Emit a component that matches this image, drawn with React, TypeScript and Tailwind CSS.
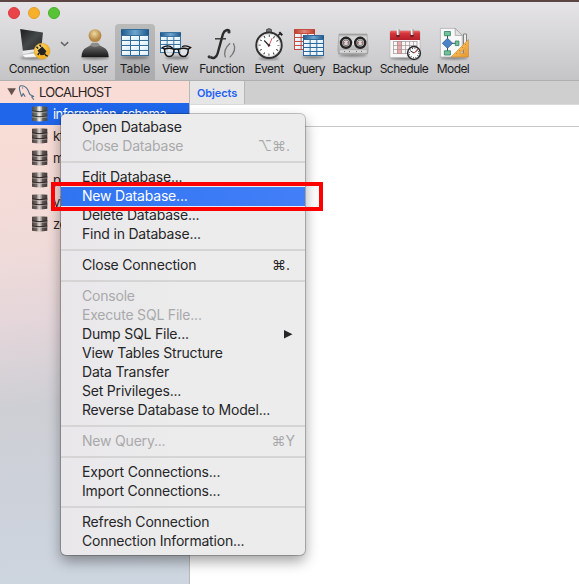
import React from "react";

function Defs() {
  return (
    <svg className="absolute h-0 w-0">
      <defs>
        <linearGradient id="blueHead" x1="0" x2="1"><stop offset="0" stopColor="#1d5689" /><stop offset=".5" stopColor="#6ea6ce" /><stop offset="1" stopColor="#1d5689" /></linearGradient>
        <linearGradient id="redHead" x1="0" x2="1"><stop offset="0" stopColor="#b83a2c" /><stop offset=".5" stopColor="#e08877" /><stop offset="1" stopColor="#b83a2c" /></linearGradient>
        <linearGradient id="cell" x1="0" y1="0" x2="1" y2="1"><stop offset="0" stopColor="#ffffff" /><stop offset="1" stopColor="#d3eafa" /></linearGradient>
        <linearGradient id="screen" x1="0" y1="0" x2="1" y2="1"><stop offset="0" stopColor="#1b1d1e" /><stop offset=".5" stopColor="#454849" /><stop offset="1" stopColor="#232526" /></linearGradient>
        <radialGradient id="gold" cx=".4" cy=".35"><stop offset="0" stopColor="#ffe793" /><stop offset="1" stopColor="#f5b022" /></radialGradient>
        <radialGradient id="skin" cx=".45" cy=".35"><stop offset="0" stopColor="#f0d9a3" /><stop offset="1" stopColor="#b48843" /></radialGradient>
        <linearGradient id="suit" x1="0" y1="0" x2="0" y2="1"><stop offset="0" stopColor="#777" /><stop offset=".45" stopColor="#484848" /><stop offset="1" stopColor="#171717" /></linearGradient>
        <linearGradient id="metal" x1="0" y1="0" x2="0" y2="1"><stop offset="0" stopColor="#9b9b9b" /><stop offset=".15" stopColor="#d9d9d9" /><stop offset="1" stopColor="#aaa" /></linearGradient>
        <linearGradient id="redCal" x1="0" y1="0" x2="0" y2="1"><stop offset="0" stopColor="#ef6a68" /><stop offset=".3" stopColor="#d3343a" /><stop offset="1" stopColor="#b51f28" /></linearGradient>
        <linearGradient id="ruler" x1="0" y1="0" x2="1" y2="1"><stop offset="0" stopColor="#ffd874" /><stop offset="1" stopColor="#e8962a" /></linearGradient>
        <linearGradient id="drum" x1="0" x2="1"><stop offset="0" stopColor="#4b403d" /><stop offset=".28" stopColor="#6f6461" /><stop offset=".36" stopColor="#b5aca8" /><stop offset=".5" stopColor="#d8cfcb" /><stop offset=".66" stopColor="#8a7f7b" /><stop offset=".72" stopColor="#5c5250" /><stop offset="1" stopColor="#40383a" /></linearGradient>
        <linearGradient id="drumLit" x1="0" x2="1"><stop offset="0" stopColor="#4c4b4c" /><stop offset=".28" stopColor="#74756f" /><stop offset=".36" stopColor="#c9c8bf" /><stop offset=".5" stopColor="#f1efe4" /><stop offset=".66" stopColor="#97968f" /><stop offset=".72" stopColor="#605f5d" /><stop offset="1" stopColor="#47464a" /></linearGradient>
        <filter id="soft" x="-20%" y="-100%" width="140%" height="300%"><feGaussianBlur stdDeviation="1" /></filter>
      </defs>
    </svg>
  );
}

function Shadow({ cx, cy, rx }: { cx: number; cy: number; rx: number }) {
  return <ellipse cx={cx} cy={cy} rx={rx} ry="1.5" fill="#333" opacity=".5" filter="url(#soft)" />;
}

function Grid({ x, y, w, h, head, line, fill, rows }: { x: number; y: number; w: number; h: number; head: number; line: string; fill: string; rows: number }) {
  const cw = (w - 1) / 3;
  const rh = (h - head) / rows;
  const cells = [];
  for (let r = 0; r < rows; r++)
    for (let c = 0; c < 3; c++)
      cells.push(<rect key={`${r}-${c}`} x={x + 1 + c * cw} y={y + head + r * rh} width={cw - 1} height={rh - 1} fill="url(#cell)" />);
  return (
    <g>
      <rect x={x} y={y} width={w} height={h} fill={line} />
      <rect x={x} y={y} width={w} height={head - 1} fill={fill} />
      <rect x={x} y={y} width={w} height="1" fill={line} />
      {cells}
    </g>
  );
}

const icons = {
  connection: (
    <>
      <Shadow cx={33} cy={58} rx={13} />
      <path d="M30 50h6l1 5-8 1z" fill="#b9bcbe" />
      <path d="M22 54.8l13-1.8 3 2-1 2-12 .5z" fill="#fafafa" stroke="#aaa" strokeWidth=".4" />
      <path d="M20 28.7L43.5 32.4 41.5 50.5 23 54z" fill="#e8eaeb" />
      <path d="M20.2 29L43 32.6 41.4 48.4 22.8 50.8z" fill="url(#screen)" />
      <circle cx="42" cy="51.2" r="8" fill="url(#gold)" stroke="#dca132" strokeWidth=".5" />
      <path d="M37.5 50.5l4.8-3.9 4.2 4.7-2.7 3.8-3.2.1z" fill="#252321" />
      <path d="M38.2 48.5l-1.7-1.8M41 46.8l-1.4-2M44.5 53.5q1.2 2.6 3.3 2.5M39 53l-1.2 2" stroke="#252321" strokeWidth="1.5" fill="none" />
      <path d="M61 42.2l3.6 3.3 3.6-3.3" fill="none" stroke="#66666a" strokeWidth="1.6" />
    </>
  ),
  user: (
    <>
      <Shadow cx={95} cy={58} rx={14} />
      <path d="M81.5 57.2c0-5 1.8-8.3 5.5-10l5-2.8h6l5.2 2.8c3.7 1.7 5.5 5 5.5 10z" fill="url(#suit)" />
      <path d="M90 45.2q5 3.5 10 0l-2-2.5h-6z" fill="#8d8d8d" />
      <circle cx="95" cy="35.6" r="6.4" fill="url(#skin)" />
    </>
  ),
  table: (
    <>
      <Shadow cx={135} cy={57.5} rx={14} />
      <Grid x={121} y={29} w={28} h={27} head={7} rows={4} line="#336b9b" fill="url(#blueHead)" />
    </>
  ),
  view: (
    <>
      <Shadow cx={177} cy={57.7} rx={12} />
      <Grid x={160} y={32} w={21} h={21} head={5} rows={4} line="#3a73a2" fill="url(#blueHead)" />
      <g stroke="#141414" fill="#e6eaed" fillOpacity=".75">
        <path d="M164.5 49.2q4.8-2 9.5.2 0 7-4.8 7.2-4.7-.3-4.7-7.4z" strokeWidth="1.5" />
        <path d="M178.5 49.4q4.8-2.3 9.8-.2 0 7.4-5 7.4-4.5-.2-4.8-7.2z" strokeWidth="1.5" />
        <path d="M174 49.8q2.2-1.5 4.5 0M164.5 49.2l-2.2-1.6q6-3.7 10.3.3M188.3 49.2l2.4-1.6q-4.8-3-8.7-.9" fill="none" strokeWidth="1.3" />
      </g>
    </>
  ),
  fn: (
    <>
      <path d="M229.5 31.3c-1-2.1-5-1.6-6.6 2.8l-5.3 19.4c-1.2 4.1-4.3 5.6-7.2 3.5" fill="none" stroke="#2b2b2b" strokeWidth="2.4" />
      <circle cx="229" cy="31.9" r="1.6" fill="#333" />
      <circle cx="209.2" cy="56.8" r="1.6" fill="#333" />
      <path d="M215 38.8h11" stroke="#333" strokeWidth="1.4" />
      <path d="M230.1 43.2c-5 4.4-6.5 9.2-4.7 14.2M233.4 43.2c2.6 5 .7 10-3.7 14.2" fill="none" stroke="#777" strokeWidth="1.3" />
    </>
  ),
  event: (
    <>
      <Shadow cx={269} cy={58.5} rx={10} />
      <path d="M266.5 29.6q2.5-2 5 0v3h-5z" fill="#777" stroke="#333" strokeWidth=".7" />
      <path d="M278 35.5l3-2.5" stroke="#222" strokeWidth="1.5" />
      <path d="M279.3 32.2l3 3" stroke="#222" strokeWidth="2" />
      <circle cx="269" cy="45.3" r="12.7" fill="#fff" stroke="#303030" strokeWidth="2" />
      <circle cx="269" cy="45.3" r="11.3" fill="none" stroke="#bbb" strokeWidth=".6" />
      <circle cx="269" cy="45.3" r="9.4" fill="none" stroke="#333" strokeWidth="2.2" strokeDasharray=".9 4.02" strokeDashoffset=".45" />
      <path d="M269 45.5l-4.8-5" stroke="#222" strokeWidth="1.2" />
      <path d="M268.4 47l3.8-9" stroke="#dc5260" strokeWidth="1" />
      <circle cx="269" cy="45.3" r="1.2" fill="#333" />
    </>
  ),
  query: (
    <>
      <Shadow cx={313} cy={57.3} rx={11} />
      <Grid x={294} y={29} w={21} h={21} head={5} rows={4} line="#c54b3c" fill="url(#redHead)" />
      <Grid x={303} y={35} w={21} h={21} head={5} rows={4} line="#2f6898" fill="url(#blueHead)" />
    </>
  ),
  backup: (
    <>
      <Shadow cx={353} cy={55.3} rx={14} />
      <path d="M339 34h28l1.2 15.5-.7 4.5h-29l-.7-4.5z" fill="url(#metal)" stroke="#999" strokeWidth=".6" />
      <path d="M339.5 49.8h27.5v3.3h-27.5z" fill="#d9d9d9" stroke="#999" strokeWidth=".4" />
      <path d="M350 40h7v5h-7z" fill="#e5e5e5" />
      {[346, 360.2].map((x) => (
        <g key={x}>
          <circle cx={x} cy="42.8" r="5" fill="#ddd" stroke="#242424" strokeWidth="2.5" />
          <circle cx={x} cy="42.8" r="2.9" fill="#d5d5d5" stroke="#675b5b" strokeWidth=".8" />
          <path d={`M${x - 2.6} 42.8h1.4M${x + 1.2} 42.8h1.4`} stroke="#a33" strokeWidth=".9" />
        </g>
      ))}
      <path d="M344 51.5h1M349 51.5h1M356 51.5h1M361 51.5h1" stroke="#777" />
    </>
  ),
  schedule: (
    <>
      <Shadow cx={405} cy={58.2} rx={15} />
      <rect x="390" y="31" width="30" height="26.5" rx="1" fill="#f7f7f7" stroke="#aaa" strokeWidth=".5" />
      <path d="M390 40v-8q0-1.2 1.2-1.2h27.6q1.2 0 1.2 1.2v8z" fill="url(#redCal)" />
      <rect x="397" y="41" width="5" height="13" fill="#eca7a9" />
      <path d="M393 41.5h24M393 45.5h24M393 49.5h24M393 53.5h16M393.5 41v13M397.5 41v13M401.5 41v13M405.5 41v13M409.5 41v9M413.5 41v7M417 41v7" stroke="#a29494" strokeWidth=".7" />
      {[398, 412].map((x) => (
        <g key={x}>
          <circle cx={x} cy="35.4" r="1.9" fill="#731b20" />
          <path d={`M${x} 29v6`} stroke="#eee" strokeWidth="2.5" />
          <path d={`M${x + 1} 29v6`} stroke="#777" strokeWidth=".8" />
        </g>
      ))}
      <circle cx="414" cy="53" r="6.4" fill="#fff" stroke="#2a2a2a" strokeWidth="1.5" />
      <circle cx="414" cy="53" r="4.8" fill="none" stroke="#333" strokeWidth="1.2" strokeDasharray=".8 1.71" />
      <path d="M410.5 51l3.5 2 3.7-3" fill="none" stroke="#222" strokeWidth="1" />
      <path d="M414 53l3.3-3.5" stroke="#d44" strokeWidth="1" />
    </>
  ),
  model: (
    <>
      <Shadow cx={454} cy={58} rx={14} />
      <path d="M463.5 34h3v20h-3z" fill="#eee" stroke="#777" strokeWidth=".9" />
      <path d="M440.4 28.4h14.8l7 7V57h-21.8z" fill="#f8f8f8" stroke="#aaa" strokeWidth=".7" />
      <path d="M455.2 28.4v7h7z" fill="#e3e3e3" stroke="#999" strokeWidth=".7" />
      <path d="M447.5 35v18M448 43.3h8" stroke="#3e4b51" strokeWidth="1" />
      <g fill="#6fc49c" stroke="#327c60" strokeWidth=".8">
        <path d="M444.4 31.5h6v4.2h-6zM455.3 41h3.6v4.6h-3.6zM444.4 50.8h6V55h-6z" />
      </g>
      <path d="M447.5 38.3l5.2 5-5.2 5-5.2-5z" fill="#4c83c4" stroke="#255897" strokeWidth=".7" />
      <path d="M468.5 39.5V57H451z M464.7 48.7l-4.7 4.7h4.7z" fill="url(#ruler)" fillRule="evenodd" stroke="#cf8730" strokeWidth=".6" />
      <path d="M456 53l1 1M459 50l1 1M462 47l1 1M465 44l1 1" stroke="#a96719" strokeWidth=".6" />
    </>
  ),
};

const tools: { label: string; x: number; w: number; box: string; text: string; icon: keyof typeof icons }[] = [
  { label: "Connection", x: 4, w: 70, box: "w-[70px]", text: "tracking-[-0.45px]", icon: "connection" },
  { label: "User", x: 75, w: 40, box: "ml-px w-10", text: "tracking-[-0.4px]", icon: "user" },
  { label: "Table", x: 115, w: 40, box: "w-10 rounded-t bg-linear-to-b from-[#bababb] to-[#acacae]", text: "tracking-[-0.1px]", icon: "table" },
  { label: "View", x: 155, w: 40, box: "w-10", text: "tracking-[-0.4px]", icon: "view" },
  { label: "Function", x: 195, w: 54, box: "w-[54px]", text: "tracking-[-0.4px]", icon: "fn" },
  { label: "Event", x: 249, w: 40, box: "w-10", text: "tracking-[-0.5px]", icon: "event" },
  { label: "Query", x: 289, w: 40, box: "w-10", text: "tracking-[-0.55px]", icon: "query" },
  { label: "Backup", x: 329, w: 46, box: "w-[46px]", text: "tracking-[-0.6px]", icon: "backup" },
  { label: "Schedule", x: 375, w: 58, box: "w-[58px]", text: "tracking-[-0.55px]", icon: "schedule" },
  { label: "Model", x: 433, w: 40, box: "w-10", text: "tracking-[-0.6px]", icon: "model" },
];

function Toolbar() {
  return (
    <header className="flex h-[81px] flex-col border-t-2 border-b border-t-[#5d4544] border-b-[#b0b0b1] bg-linear-to-b from-[#e6e4e6] to-[#c5c5c7]">
      <div className="flex h-[22px] items-center gap-2 pl-2">
        <i className="size-3 rounded-full border border-[#d83a41] bg-[#e94549]" />
        <i className="size-3 rounded-full border border-[#e4a02b] bg-[#f6b02c]" />
        <i className="size-3 rounded-full border border-[#49ae2b] bg-[#59c336]" />
      </div>
      <nav className="flex h-14 pl-1">
        {tools.map((t) => (
          <div key={t.label} className={`flex shrink-0 flex-col items-center ${t.box}`}>
            <svg width={t.w} height="37" viewBox={`${t.x} 24 ${t.w} 37`}>{icons[t.icon]}</svg>
            <span className={`text-[12px] leading-4 whitespace-nowrap text-[#1e1e1f] ${t.text}`}>{t.label}</span>
          </div>
        ))}
      </nav>
    </header>
  );
}

function Drum({ lit }: { lit?: boolean }) {
  const fill = lit ? "url(#drumLit)" : "url(#drum)";
  const gap = lit ? "#303537" : "#2d2525";
  return (
    <svg width="16" height="16" viewBox="0 0 16 16" className="shrink-0">
      <path d="M0 .8Q7.7-.4 15.3.8V14.8Q7.7 16.2 0 14.8z" fill={fill} />
      <path d="M0 4.9q7.7 1.6 15.3 0M0 10q7.7 1.6 15.3 0" fill="none" stroke={gap} strokeWidth="1.1" />
      <path d="M5 .8v14.4M10.5 .8v14.4" stroke={gap} strokeWidth=".5" opacity=".5" />
      <path d="M0 5.9q7.7 1.6 15.3 0M0 11q7.7 1.6 15.3 0" fill="none" stroke="#d5cbc7" strokeWidth=".5" />
    </svg>
  );
}

function Sidebar() {
  return (
    <aside className="w-[190px] shrink-0 border-r border-[#b8b6b8] bg-[linear-gradient(172deg,#f9dcd5_0%,#f7dcd6_14%,#f0dbd9_32%,#e4d6da_46%,#cecfd4_62%,#cdd1d9_76%,#cdd6e0_100%)] text-[13px] text-[#2c2423]">
      <div className="flex h-[22px] items-center pl-[7px]">
        <svg width="32" height="18" viewBox="7 83 32 18" className="shrink-0">
          <path d="M7.3 88.3h8.6l-4.3 7z" fill="#66524e" />
          <path d="M21.6 96.6l-1.4-4.4c-.8-2.5-1.7-5.4.3-6.4 3-.3 5.8 1.2 7.4 4.2l2 4.5 3.8 2-2 .4 2.1 2.9M21.5 96.8l1.7-3.2 2 3.2M22.2 87.7l.8.7" fill="none" stroke="#50708a" strokeWidth="1.1" strokeLinejoin="round" />
        </svg>
        <span className="pt-0.5 tracking-[-0.75px]">LOCALHOST</span>
      </div>
      {["information_schema", "kf", "m", "p", "vi", "zo"].map((name, i) => (
        <div key={name} className={i === 0 ? "flex h-[22px] items-center gap-[5px] bg-[#1f66eb] pl-8 text-white" : "flex h-[22px] items-center gap-[5px] pl-8"}>
          <Drum lit={i === 0} />
          <span className="pt-0.5 tracking-[-0.6px]">{name}</span>
        </div>
      ))}
    </aside>
  );
}

type Entry = { label: string; keys?: string; off?: boolean; on?: boolean; sub?: boolean };
const groups: Entry[][] = [
  [{ label: "Open Database" }, { label: "Close Database", keys: "⌥⌘.", off: true }],
  [{ label: "Edit Database..." }, { label: "New Database...", on: true }, { label: "Delete Database..." }, { label: "Find in Database..." }],
  [{ label: "Close Connection", keys: "⌘." }],
  [
    { label: "Console", off: true },
    { label: "Execute SQL File...", off: true },
    { label: "Dump SQL File...", sub: true },
    { label: "View Tables Structure" },
    { label: "Data Transfer" },
    { label: "Set Privileges..." },
    { label: "Reverse Database to Model..." },
  ],
  [{ label: "New Query...", keys: "⌘Y", off: true }],
  [{ label: "Export Connections..." }, { label: "Import Connections..." }],
  [{ label: "Refresh Connection" }, { label: "Connection Information..." }],
];

function ContextMenu() {
  return (
    <div className="absolute top-[114px] left-[61px] w-[244px] rounded-[5px] bg-[#ebebeb] bg-linear-to-r from-[#e9e7ea] to-[#ececec] to-50% py-1 text-[14px] shadow-[0_0_0_1px_rgba(0,0,0,0.22),0_6px_14px_rgba(0,0,0,0.38)]">
      {groups.map((g, i) => (
        <div key={i}>
          {i > 0 && <div className="my-[5px] h-0.5 bg-[#d5d5d6]" />}
          {g.map((e) => (
            <div
              key={e.label}
              className={`flex h-[19px] items-center justify-between pb-0.5 pl-[21px] ${e.keys?.endsWith("Y") ? "pr-2.5" : e.sub ? "pr-3" : "pr-[15px]"} ${e.on ? "bg-linear-to-r from-[#3074f2] to-[#427ff8] text-white" : e.off ? "text-[#a9a9ab]" : "text-[#262628]"}`}
            >
              <span className="leading-[17px] tracking-[-0.2px] whitespace-nowrap">{e.label}</span>
              {e.keys && <span className="leading-[17px]">{e.keys}</span>}
              {e.sub && (
                <svg width="9" height="10" viewBox="0 0 9 10"><path d="M0 1l8.5 4.2L0 9.5z" fill="#262628" /></svg>
              )}
            </div>
          ))}
        </div>
      ))}
    </div>
  );
}

export default function App() {
  return (
    <div className="relative flex h-[584px] w-[579px] flex-col overflow-hidden bg-white font-['Inter','Liberation_Sans','DejaVu_Sans',sans-serif]">
      <Defs />
      <Toolbar />
      <div className="flex min-h-0 flex-1">
        <Sidebar />
        <main className="flex-1 bg-white">
          <div className="flex h-6 border-b border-[#dadada] bg-[#cfcfcf]">
            <div className="flex w-[55px] items-center justify-center border-r border-[#b7b7b7] bg-[#e6e6e6] pt-0.5 text-[11px] font-semibold tracking-[-0.1px] text-[#1e62f5]">Objects</div>
          </div>
          <div className="h-[22px] border-b border-[#c8c8c8]" />
        </main>
      </div>
      <ContextMenu />
      <div className="absolute top-[182px] left-[51px] h-[29px] w-[272px] border-4 border-[#fe0000]" />
    </div>
  );
}
